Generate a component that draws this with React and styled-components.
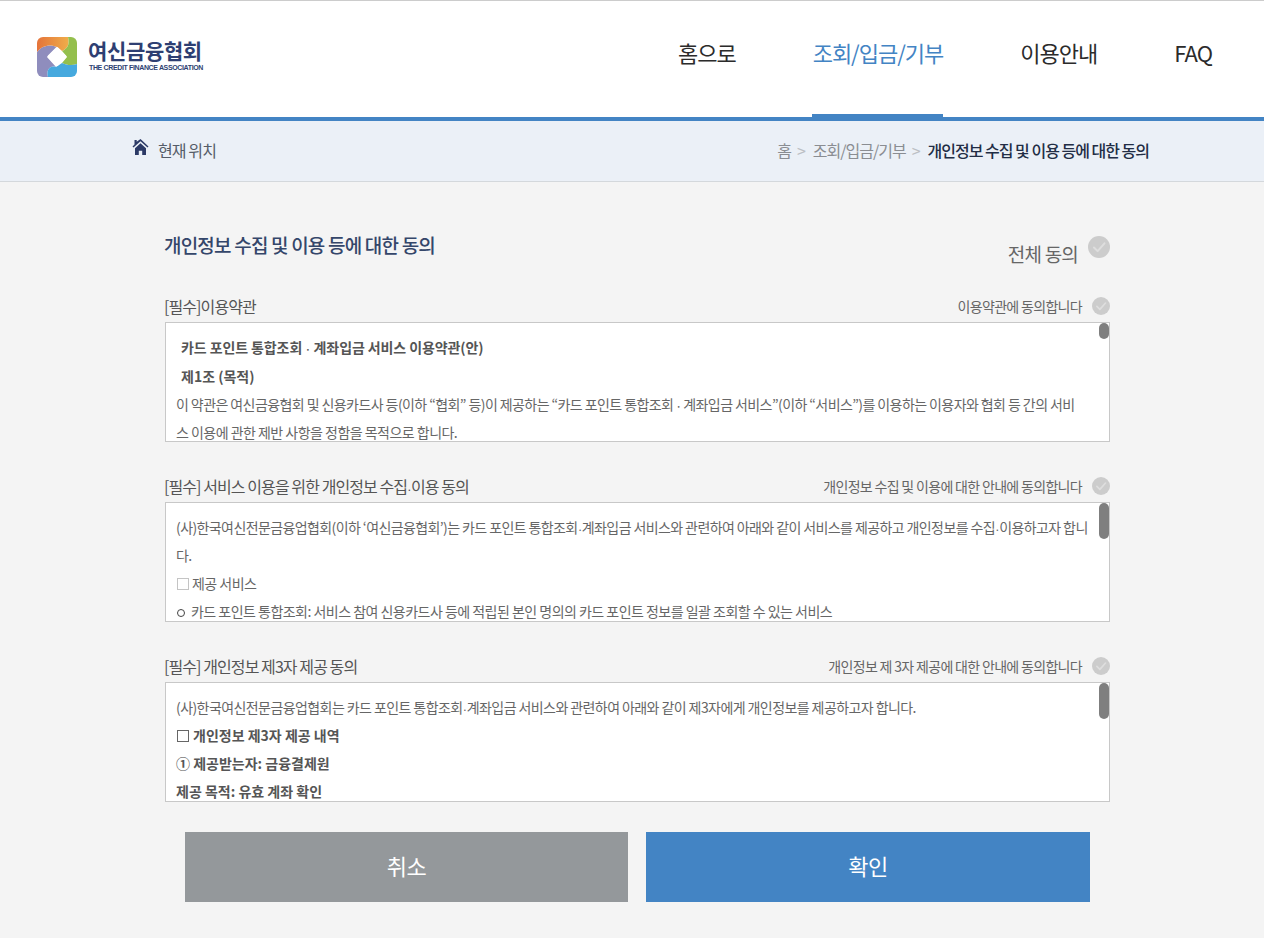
import React from 'react'
import styled, { createGlobalStyle } from 'styled-components'

const GlobalStyle = createGlobalStyle`
    html, body { margin: 0; padding: 0; background: #f4f4f4; }
    body { font-family: "Noto Sans CJK KR", "Noto Sans", sans-serif; }
    * { box-sizing: border-box; }
`

const Page = styled.div`
    width: 1264px;
    height: 938px;
    overflow: hidden;
    background: #f4f4f4;
`

const Header = styled.header`
    height: 121px;
    background: #fff;
    border-top: 1px solid #ccc;
    border-bottom: 4px solid #4384c4;
    display: flex;
    justify-content: space-between;
    padding: 0 52px 0 37px;
`

const Logo = styled.div`
    display: flex;
    align-items: flex-start;
    gap: 11px;
    height: 40px;
    margin-top: 36px;
`

const LogoText = styled.div`
    display: flex;
    flex-direction: column;
    align-items: flex-start;
`

const LogoName = styled.span`
    font-size: 21px;
    line-height: 26px;
    font-weight: 700;
    letter-spacing: -0.35px;
    color: #2e3f72;
`

const LogoSub = styled.span`
    font-family: "Liberation Sans", sans-serif;
    font-size: 7px;
    line-height: 9px;
    font-weight: 700;
    margin-left: 1px;
    letter-spacing: -0.36px;
    color: #2e3f72;
`

const Nav = styled.nav`
    display: flex;
    gap: 77px;
`

const NavItem = styled.a`
    position: relative;
    display: block;
    padding-top: 34px;
    font-size: 22px;
    line-height: 34px;
    letter-spacing: -1px;
    color: ${p => (p.$active ? '#4384c4' : '#2b2b2b')};

    ${p => p.$active && `
        &::after {
            content: '';
            position: absolute;
            left: -1px;
            right: 0;
            bottom: 0;
            height: 3px;
            background: #4384c4;
        }
    `}
`

const Crumbs = styled.div`
    height: 61px;
    background: #ebf0f7;
    border-bottom: 1px solid #d4d8dc;
    display: flex;
    justify-content: space-between;
    align-items: center;
    padding: 0 115px 3px 132px;
`

const Here = styled.div`
    display: flex;
    align-items: center;
    gap: 9px;
    font-size: 16px;
    letter-spacing: -0.9px;
    color: #555c68;
`

const Trail = styled.div`
    display: flex;
    align-items: center;
    font-size: 16px;
    letter-spacing: -1px;
    color: #8a8d92;
`

const TrailSep = styled.span`
    margin: 0 8px 0 6px;
    color: #bcbfc4;
`

const TrailNow = styled.strong`
    font-weight: 500;
    color: #222d45;
`

const Main = styled.main`
    width: 945px;
    margin-left: 165px;
`

const TitleRow = styled.div`
    display: flex;
    justify-content: space-between;
    height: 110px;
    padding-top: 48px;
`

const Title = styled.h1`
    margin: 0 0 0 -1px;
    font-size: 19px;
    line-height: 30px;
    font-weight: 500;
    letter-spacing: -0.8px;
    color: #34466a;
`

const AllAgree = styled.div`
    display: flex;
    gap: 10px;
    font-size: 19px;
    line-height: 30px;
    letter-spacing: -0.8px;
    color: #666;
    padding-top: 9px;
`

const Check = styled.span`
    display: block;
    flex: none;
    width: ${p => p.$size}px;
    height: ${p => p.$size}px;
    margin-top: ${p => p.$top || 0}px;
    border-radius: 50%;
    background: #ccc;
    color: #dedede;

    svg { display: block; width: 100%; height: 100%; }
`

const Section = styled.section`
    margin-bottom: 30px;
`

const SectionHead = styled.div`
    display: flex;
    justify-content: space-between;
    align-items: center;
    height: 28px;
    margin-bottom: 2px;
`

const SectionTitle = styled.h2`
    margin: 0 0 0 -1px;
    font-size: 16px;
    line-height: 28px;
    font-weight: 400;
    letter-spacing: -0.92px;
    color: #555;
`

const AgreeLabel = styled.div`
    display: flex;
    align-items: center;
    gap: 10px;
    font-size: 14px;
    letter-spacing: -0.68px;
    color: #666;
`

const Box = styled.div`
    position: relative;
    height: 120px;
    overflow: hidden;
    background: #fff;
    border: 1px solid #c8c8c8;
    padding: 10px 20px 0 10px;
    font-size: 14px;
    line-height: 28px;
    letter-spacing: -0.52px;
    color: #666;
`

const Thumb = styled.span`
    position: absolute;
    top: 0;
    right: 0;
    width: 10px;
    height: ${p => p.$height}px;
    border-radius: 5px;
    background: #7f7f7f;
`

const Line = styled.div`
    white-space: nowrap;
    padding-left: ${p => p.$indent || 0}px;
    margin-bottom: ${p => p.$after || 0}px;
    font-weight: ${p => (p.$bold ? 700 : 400)};
    letter-spacing: ${p => p.$track ?? (p.$bold ? 0 : -0.52)}px;
    color: ${p => (p.$bold ? '#555' : 'inherit')};
`

const Dot = styled.span`
    font-size: ${p => (p.$spaced ? 9 : 8)}px;
    line-height: 0;
    font-weight: 700;
`

const SquareMark = styled.span`
    display: inline-block;
    width: 12px;
    height: 12px;
    margin: 0 ${p => (p.$light ? 3 : 4)}px 0 1px;
    vertical-align: -1px;
    border: 1px solid ${p => (p.$light ? '#c4c4c4' : '#666')};
`

const RingMark = styled.span`
    display: inline-block;
    width: 8px;
    height: 8px;
    margin: 0 6px 0 1px;
    border: 1px solid #444;
    border-radius: 50%;
`

const Buttons = styled.div`
    display: flex;
    gap: 18px;
    margin-left: 20px;
`

const Button = styled.button`
    width: ${p => p.$width}px;
    height: 70px;
    border: 0;
    padding: 0 0 5px;
    font-family: inherit;
    font-size: 22px;
    letter-spacing: -0.5px;
    color: #fff;
    background: ${p => p.$bg};
`

const CheckIcon = () => (
    <svg viewBox="0 0 24 24" fill="none" stroke="currentColor" strokeWidth="2.2" strokeLinecap="round" strokeLinejoin="round">
        <path d="M6.5 12.5l4 4 7.5-8.5" />
    </svg>
)

const HomeIcon = () => (
    <svg width="17" height="16" viewBox="0 0 17 16" fill="#2c3a66" style={{ marginBottom: 5 }}>
        <path d="M2.5 1h2.2v1.8L8.5 0l8 7.4-1 1.1-7-6.3-7 6.3-1-1.1 2-1.9z" />
        <path d="M3 9.2l5.5-5 5.5 5V16h-3.8v-4.2H6.8V16H3z" />
    </svg>
)

const LogoMark = () => (
    <svg width="40" height="40" viewBox="0 0 40 40">
        <defs>
            <clipPath id="logo-round"><rect width="40" height="40" rx="6" /></clipPath>
            <linearGradient id="logo-orange" x1="0" y1="0" x2="1" y2="0">
                <stop offset="0" stopColor="#e5733a" />
                <stop offset="1" stopColor="#efad4a" />
            </linearGradient>
        </defs>
        <g clipPath="url(#logo-round)">
            <path d="M0 15V40H11C9 33 13 28 19 30L10 20 20 10C14 7 5 8 0 15Z" fill="#8f8dbd" />
            <path d="M0 0H31C33 8 30 12 25 14L20 10C14 7 5 8 0 15Z" fill="url(#logo-orange)" />
            <path d="M31 0H40V27C35 29 29 28 25 26L30 20 25 14C30 12 33 8 31 0Z" fill="#94bf4d" />
            <path d="M40 27V40H11C9 33 13 28 19 30L25 26C29 28 35 29 40 27Z" fill="#46a9de" />
            <path d="M20 11.5L28 19.5 20 27.5 12 19.5Z" fill="#fff" stroke="#fff" strokeWidth="3" strokeLinejoin="round" />
        </g>
    </svg>
)

const renderText = text => text.split(/( · |·)/).map((part, i) => {
    if (part === ' · ') return <React.Fragment key={i}> <Dot $spaced>·</Dot> </React.Fragment>
    if (part === '·') return <Dot key={i}>·</Dot>
    return part
})

const sections = [
    {
        title: '[필수]이용약관',
        agree: '이용약관에 동의합니다',
        thumb: 16,
        lines: [
            { text: '카드 포인트 통합조회 · 계좌입금 서비스 이용약관(안)', bold: true, indent: 5, after: 1, track: -0.1 },
            { text: '제1조 (목적)', bold: true, indent: 5 },
            { text: '이 약관은 여신금융협회 및 신용카드사 등(이하 “협회” 등)이 제공하는 “카드 포인트 통합조회 · 계좌입금 서비스”(이하 “서비스”)를 이용하는 이용자와 협회 등 간의 서비', track: -0.58 },
            { text: '스 이용에 관한 제반 사항을 정함을 목적으로 합니다.' },
        ],
    },
    {
        title: '[필수] 서비스 이용을 위한 개인정보 수집·이용 동의',
        agree: '개인정보 수집 및 이용에 대한 안내에 동의합니다',
        thumb: 36,
        lines: [
            { text: '(사)한국여신전문금융업협회(이하 ‘여신금융협회’)는 카드 포인트 통합조회·계좌입금 서비스와 관련하여 아래와 같이 서비스를 제공하고 개인정보를 수집·이용하고자 합니', track: -0.6 },
            { text: '다.' },
            { text: '제공 서비스', mark: 'lightSquare' },
            { text: '카드 포인트 통합조회: 서비스 참여 신용카드사 등에 적립된 본인 명의의 카드 포인트 정보를 일괄 조회할 수 있는 서비스', mark: 'ring' },
        ],
    },
    {
        title: '[필수] 개인정보 제3자 제공 동의',
        agree: '개인정보 제 3자 제공에 대한 안내에 동의합니다',
        thumb: 36,
        lines: [
            { text: '(사)한국여신전문금융업협회는 카드 포인트 통합조회·계좌입금 서비스와 관련하여 아래와 같이 제3자에게 개인정보를 제공하고자 합니다.', track: -0.58 },
            { text: '개인정보 제3자 제공 내역', bold: true, mark: 'square' },
            { text: '① 제공받는자: 금융결제원', bold: true },
            { text: '제공 목적: 유효 계좌 확인', bold: true },
        ],
    },
]

const App = () => (
    <Page>
        <GlobalStyle />
        <Header>
            <Logo>
                <LogoMark />
                <LogoText>
                    <LogoName>여신금융협회</LogoName>
                    <LogoSub>THE CREDIT FINANCE ASSOCIATION</LogoSub>
                </LogoText>
            </Logo>
            <Nav>
                <NavItem>홈으로</NavItem>
                <NavItem $active>조회/입금/기부</NavItem>
                <NavItem>이용안내</NavItem>
                <NavItem>FAQ</NavItem>
            </Nav>
        </Header>
        <Crumbs>
            <Here><HomeIcon />현재 위치</Here>
            <Trail>
                홈<TrailSep>&gt;</TrailSep>
                조회/입금/기부<TrailSep>&gt;</TrailSep>
                <TrailNow>개인정보 수집 및 이용 등에 대한 동의</TrailNow>
            </Trail>
        </Crumbs>
        <Main>
            <TitleRow>
                <Title>개인정보 수집 및 이용 등에 대한 동의</Title>
                <AllAgree>전체 동의<Check $size={22} $top={-3}><CheckIcon /></Check></AllAgree>
            </TitleRow>
            {sections.map(section => (
                <Section key={section.title}>
                    <SectionHead>
                        <SectionTitle>{renderText(section.title)}</SectionTitle>
                        <AgreeLabel>{section.agree}<Check $size={18}><CheckIcon /></Check></AgreeLabel>
                    </SectionHead>
                    <Box>
                        <Thumb $height={section.thumb} />
                        {section.lines.map(line => (
                            <Line key={line.text} $bold={line.bold} $indent={line.indent} $after={line.after} $track={line.track}>
                                {line.mark === 'lightSquare' && <SquareMark $light />}
                                {line.mark === 'square' && <SquareMark />}
                                {line.mark === 'ring' && <RingMark />}
                                {renderText(line.text)}
                            </Line>
                        ))}
                    </Box>
                </Section>
            ))}
            <Buttons>
                <Button $width={443} $bg="#94989b">취소</Button>
                <Button $width={444} $bg="#4384c4">확인</Button>
            </Buttons>
        </Main>
    </Page>
)

export default App
